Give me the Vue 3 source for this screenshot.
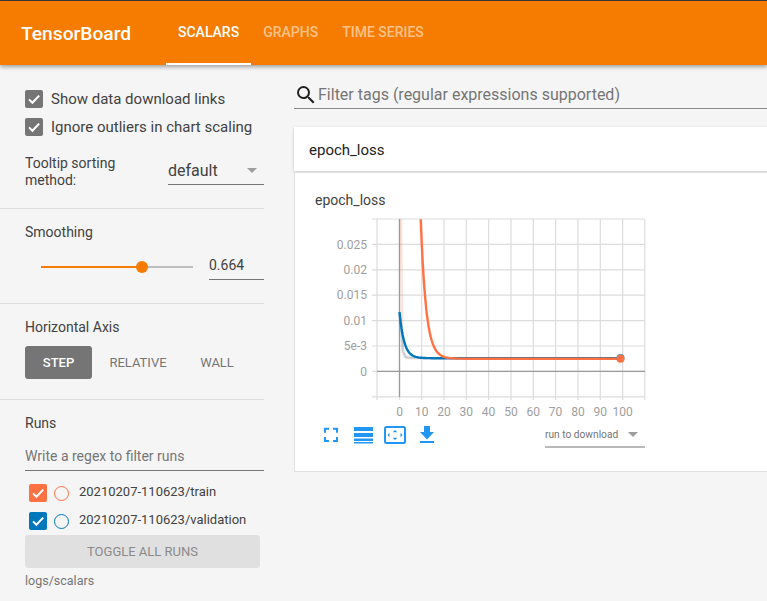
<script setup>
const xLines = [377, 399.5, 421.7, 444, 466.3, 488.6, 511, 533.3, 555.6, 578, 600.3, 622.6, 644.8]
const yLines = [219, 244.4, 269.8, 295.2, 320.6, 346, 371.3, 396.8]
const yLabels = [
  { t: '0.025', y: 244 },
  { t: '0.02', y: 269.4 },
  { t: '0.015', y: 294.8 },
  { t: '0.01', y: 320.2 },
  { t: '5e-3', y: 345.6 },
  { t: '0', y: 371 }
]
const xLabels = [0, 10, 20, 30, 40, 50, 60, 70, 80, 90, 100]
const ox = 295
const oy = 173
const px = (x) => x - ox
const py = (y) => y - oy

function decay(x0, amp, tau, base) {
  const pts = []
  for (let x = x0; x < x0 + 50; x += 1) {
    pts.push(`${x.toFixed(1)} ${(base - amp * Math.exp(-(x - x0) / tau)).toFixed(1)}`)
  }
  pts.push(`620.5 ${base}`)
  return 'M' + pts.join(' L')
}
const orangePath = decay(420.7, 139.5, 5.4, 358.7)
const bluePath = decay(399.5, 46, 4.6, 358.2)
</script>

<template>
  <div class="page">
    <div class="strip"></div>
    <header class="toolbar">
      <div class="brand">TensorBoard</div>
      <nav class="tabs">
        <div class="tab active">SCALARS</div>
        <div class="tab">GRAPHS</div>
        <div class="tab">TIME SERIES</div>
      </nav>
    </header>
    <div class="body">
      <aside class="sidebar">
        <section class="sec sec-opts">
          <label class="check-row">
            <span class="box grey"><svg viewBox="0 0 18 18" width="18" height="18"><path d="M4 9.4l3.4 3.4L14.2 5.6" fill="none" stroke="#fff" stroke-width="2"/></svg></span>
            <span>Show data download links</span>
          </label>
          <label class="check-row">
            <span class="box grey"><svg viewBox="0 0 18 18" width="18" height="18"><path d="M4 9.4l3.4 3.4L14.2 5.6" fill="none" stroke="#fff" stroke-width="2"/></svg></span>
            <span>Ignore outliers in chart scaling</span>
          </label>
          <div class="tooltip-row">
            <div class="tooltip-label">Tooltip sorting method:</div>
            <div class="select">
              <span>default</span>
              <span class="caret"></span>
            </div>
          </div>
        </section>
        <section class="sec sec-smooth">
          <div class="sec-title">Smoothing</div>
          <div class="slider-row">
            <div class="slider">
              <div class="fill"></div>
              <div class="rest"></div>
              <div class="knob"></div>
            </div>
            <div class="num">0.664</div>
          </div>
        </section>
        <section class="sec sec-axis">
          <div class="sec-title">Horizontal Axis</div>
          <div class="axis-btns">
            <div class="btn step">STEP</div>
            <div class="btn relative">RELATIVE</div>
            <div class="btn wall">WALL</div>
          </div>
        </section>
        <section class="sec-runs">
          <div class="sec-title">Runs</div>
          <div class="regex">Write a regex to filter runs</div>
          <div class="run-row first">
            <span class="box orange"><svg viewBox="0 0 18 18" width="18" height="18"><path d="M4 9.4l3.4 3.4L14.2 5.6" fill="none" stroke="#fff" stroke-width="2"/></svg></span>
            <span class="radio r-orange"></span>
            <span class="run-name">20210207-110623/train</span>
          </div>
          <div class="run-row">
            <span class="box blue"><svg viewBox="0 0 18 18" width="18" height="18"><path d="M4 9.4l3.4 3.4L14.2 5.6" fill="none" stroke="#fff" stroke-width="2"/></svg></span>
            <span class="radio r-blue"></span>
            <span class="run-name">20210207-110623/validation</span>
          </div>
          <div class="toggle">TOGGLE ALL RUNS</div>
          <div class="logdir">logs/scalars</div>
        </section>
      </aside>
      <main class="main">
        <div class="filter">
          <svg class="search" viewBox="0 0 24 24" width="24" height="24"><path d="M15.5 14h-.79l-.28-.27A6.47 6.47 0 0 0 16 9.5 6.5 6.5 0 1 0 9.5 16c1.61 0 3.09-.59 4.23-1.57l.27.28v.79l5 4.99L20.49 19l-4.99-5zm-6 0C7.01 14 5 11.99 5 9.5S7.01 5 9.5 5 14 7.01 14 9.5 11.99 14 9.5 14z" fill="#212121"/></svg>
          <span>Filter tags (regular expressions supported)</span>
        </div>
        <div class="group-head">epoch_loss</div>
        <div class="card">
          <svg class="chart" width="472" height="298" viewBox="0 0 472 298">
            <text :x="20" :y="32" class="title">epoch_loss</text>
            <g>
              <line v-for="(x, i) in xLines" :key="'v' + i" :x1="px(x)" :x2="px(x)" :y1="py(219)" :y2="py(400)" class="grid"/>
              <line v-for="(y, i) in yLines" :key="'h' + i" :x1="px(372)" :x2="px(645)" :y1="py(y)" :y2="py(y)" class="grid"/>
              <line :x1="px(399.5)" :x2="px(399.5)" :y1="py(219)" :y2="py(397)" class="axis"/>
              <line :x1="px(377)" :x2="px(645)" :y1="py(371.3)" :y2="py(371.3)" class="axis"/>
            </g>
            <text v-for="l in yLabels" :key="l.t" :x="px(367)" :y="py(l.y) + 4.5" class="tick" text-anchor="end">{{ l.t }}</text>
            <text v-for="(l, i) in xLabels" :key="l" :x="px(xLines[i + 1])" :y="py(416)" class="tick" text-anchor="middle">{{ l }}</text>

            <g :transform="`translate(${-ox} ${-oy})`">
              <path d="M401 219 L402.5 352 L407 358 L445 358.6" class="raw" stroke="#ff7043"/>
              <path d="M399.5 312 L403 350 L405 357 L415 358.2" class="raw" stroke="#0077bb"/>
              <path :d="bluePath" class="line" stroke="#0077bb"/>
              <path :d="orangePath" class="line" stroke="#ff7043"/>
              <circle cx="620.5" cy="358" r="4" fill="#0077bb" opacity="0.8"/>
              <circle cx="620.5" cy="358.8" r="4" fill="#ff7043"/>
            </g>

            <g :transform="`translate(${-ox} ${-oy})`">
              <path d="M325 432.7v-4h4M333 428.7h4v4M337 437v4h-4M329 441h-4v-4" fill="none" stroke="#2196f3" stroke-width="2"/>
              <path d="M354 427h19v4h-19zM354 433h19v4h-19zM354 438.5h19v2.5h-19zM354 442h19v1.6h-19z" fill="#2196f3"/>
              <rect x="385" y="427" width="20" height="16" rx="1.5" fill="none" stroke="#2196f3" stroke-width="2"/>
              <path d="M395 430l2.4 2.2h-4.8zM395 440l2.4-2.2h-4.8zM387.5 435l2-2.2v4.4zM402.5 435l-2-2.2v4.4z" fill="#2196f3"/>
              <path d="M424 426h6v6h4l-7 7.4-7-7.4h4zM420 441h14v2h-14z" fill="#2196f3"/>
            </g>

            <text :x="px(545)" :y="py(437.5)" class="dl">run to download</text>
            <path :d="`M${px(628)} ${py(432)}h10l-5 5z`" fill="#9e9e9e"/>
            <line :x1="px(545)" :x2="px(645)" :y1="py(447)" :y2="py(447)" stroke="#757575"/>
          </svg>
        </div>
      </main>
    </div>
  </div>
</template>

<style>
html, body { margin: 0; padding: 0; background: #f5f5f5; }
</style>

<style scoped>
.page {
  width: 767px;
  height: 601px;
  overflow: hidden;
  display: flex;
  flex-direction: column;
  background: #f5f5f5;
  font-family: Roboto, sans-serif;
  color: #424242;
}
.strip { height: 1px; background: #3a3a3a; flex: none; }
.toolbar {
  height: 64px;
  flex: none;
  background: #f57c00;
  display: flex;
  align-items: stretch;
  box-shadow: 0 2px 4px rgba(0, 0, 0, 0.35);
  position: relative;
  color: #fff;
}
.brand {
  width: 166px;
  box-sizing: border-box;
  padding-left: 21px;
  font-size: 19.2px;
  font-weight: 500;
  line-height: 65px;
}
.tabs { display: flex; }
.tab {
  padding: 0 12px;
  font-size: 14px;
  font-weight: 500;
  line-height: 63px;
  color: rgba(255, 255, 255, 0.55);
  box-sizing: border-box;
  height: 64px;
}
.tab.active { color: #fff; border-bottom: 2px solid #fff; }
.body { flex: 1; display: flex; min-height: 0; }
.sidebar { width: 264px; flex: none; }
.sec { border-bottom: 1px solid #dcdcdc; box-sizing: border-box; padding-left: 25px; }
.sec-opts { height: 144px; padding-top: 25px; }
.check-row {
  display: flex;
  align-items: center;
  gap: 8px;
  height: 18px;
  margin-bottom: 10px;
  font-size: 15px;
}
.box { width: 18px; height: 18px; border-radius: 2px; display: block; flex: none; }
.box svg { display: block; }
.box.grey { background: #757575; }
.box.orange { background: #ff7043; }
.box.blue { background: #0077bb; }
.tooltip-row { display: flex; margin-top: 19px; }
.tooltip-label { width: 143px; font-size: 14px; line-height: 17px; }
.select {
  width: 96px;
  height: 30px;
  box-sizing: border-box;
  border-bottom: 1px solid #757575;
  display: flex;
  align-items: center;
  justify-content: space-between;
  font-size: 16px;
  padding: 2px 7px 0 0;
}
.caret { width: 0; height: 0; border-left: 5px solid transparent; border-right: 5px solid transparent; border-top: 5px solid #9e9e9e; }
.sec-title { font-size: 14px; line-height: 17px; }
.sec-smooth { height: 95px; padding-top: 15px; }
.slider-row { display: flex; align-items: flex-start; margin-top: 9px; }
.slider { position: relative; width: 168px; height: 20px; margin: 7px 0 0 16px; flex: none; }
.fill { position: absolute; left: 0; top: 9px; width: 101px; height: 2px; background: #f57c00; }
.rest { position: absolute; left: 101px; top: 9px; width: 51px; height: 2px; background: #bdbdbd; }
.knob { position: absolute; left: 95px; top: 4px; width: 12px; height: 12px; border-radius: 50%; background: #f57c00; }
.num {
  width: 55px;
  height: 30px;
  flex: none;
  box-sizing: border-box;
  border-bottom: 1px solid #757575;
  font-size: 14px;
  line-height: 30px;
}
.sec-axis { height: 96px; padding-top: 15px; }
.axis-btns { display: flex; margin-top: 10px; }
.btn { height: 33px; line-height: 33px; font-size: 13px; font-weight: 400; text-align: center; color: #757575; border-radius: 3px; }
.btn.step { width: 67px; background: #757575; color: #fff; font-weight: 500; }
.btn.relative { width: 92px; }
.btn.wall { width: 66px; }
.sec-runs { padding: 15px 4px 0 25px; }
.regex {
  margin-top: 10px;
  height: 29px;
  width: 239px;
  box-sizing: border-box;
  border-bottom: 1px solid #757575;
  font-size: 14px;
  line-height: 28px;
  color: #757575;
}
.run-row { display: flex; align-items: center; height: 18px; margin-left: 4px; margin-top: 10px; font-size: 13px; }
.run-row.first { margin-top: 13px; }
.run-name { margin-bottom: 4px; }
.radio { width: 15px; height: 15px; box-sizing: border-box; border-radius: 50%; border-width: 1.5px; border-style: solid; margin: 0 10px 0 7px; flex: none; }
.r-orange { border-color: #ff7043; }
.r-blue { border-color: #0077bb; }
.toggle {
  width: 235px;
  height: 33px;
  margin-top: 5px;
  background: #e0e0e0;
  border-radius: 3px;
  color: #8a8a8a;
  text-align: center;
  line-height: 33px;
  font-size: 13px;
}
.logdir { margin-top: 5px; font-size: 12.5px; color: #757575; }
.main { flex: 1; min-width: 0; padding-left: 30px; }
.filter {
  height: 44px;
  box-sizing: border-box;
  border-bottom: 1px solid #8a8a8a;
  display: flex;
  align-items: center;
  font-size: 16px;
  color: #757575;
  padding: 18px 0 2px;
  margin-right: -20px;
}
.search { flex: none; }
.group-head {
  margin-top: 18px;
  height: 44px;
  background: #fff;
  line-height: 46px;
  padding-left: 15px;
  font-size: 15px;
  color: #212121;
  box-shadow: 0 1px 3px rgba(0, 0, 0, 0.2);
  margin-right: -20px;
}
.card {
  margin-top: 1px;
  height: 300px;
  box-sizing: border-box;
  background: #fff;
  border: 1px solid #e0e0e0;
  border-right: 0;
  margin-right: -20px;
}
.chart { display: block; }
.title { font: 14px Roboto, sans-serif; fill: #424242; }
.grid { stroke: #dcdcdc; stroke-width: 1.2; }
.axis { stroke: #9a9a9a; stroke-width: 1.3; }
.tick { font: 12px Roboto, sans-serif; fill: #9e9e9e; }
.line { fill: none; stroke-width: 2.4; }
.raw { fill: none; stroke-width: 2.4; opacity: 0.2; }
.dl { font: 10.2px Roboto, sans-serif; fill: #757575; }
</style>
